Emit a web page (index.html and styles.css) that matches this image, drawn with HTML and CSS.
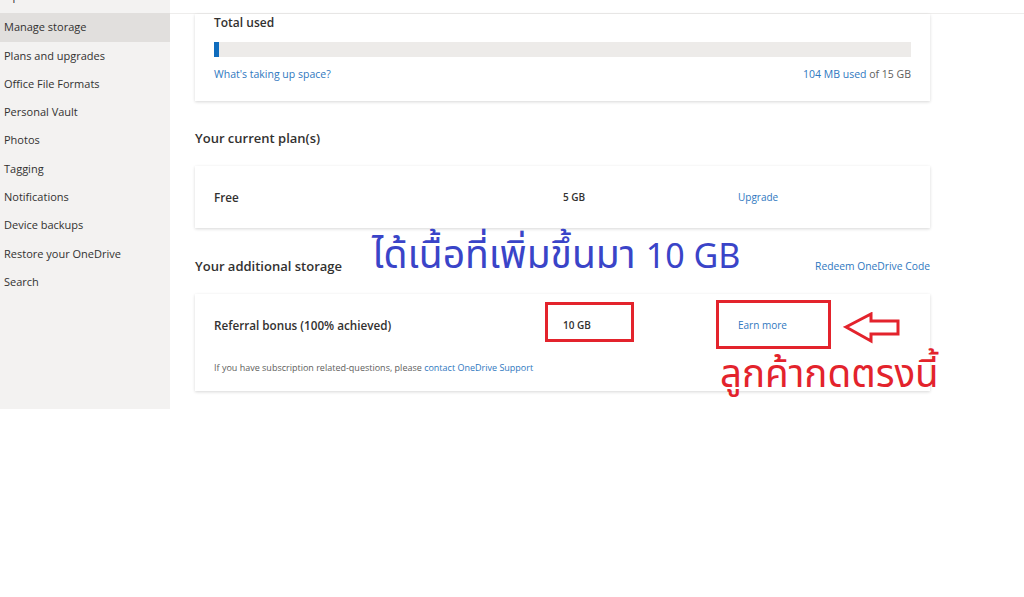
FILE: index.html
```html
<!DOCTYPE html>
<html lang="en">
<head>
<meta charset="UTF-8" />
<title>Manage storage - OneDrive</title>
<link rel="stylesheet" href="styles.css">
</head>
<body>
<div class="page">
  <nav class="sidebar">
    <ul class="nav-list">
      <li class="clipped">Options</li>
      <li class="active">Manage storage</li>
      <li>Plans and upgrades</li>
      <li>Office File Formats</li>
      <li>Personal Vault</li>
      <li>Photos</li>
      <li>Tagging</li>
      <li>Notifications</li>
      <li>Device backups</li>
      <li>Restore your OneDrive</li>
      <li>Search</li>
    </ul>
  </nav>

  <main class="content">
    <div class="topbar"></div>

    <section class="card usage">
      <div class="usage-title">Total used</div>
      <div class="bar"><div class="bar-fill" style="width: 5px"></div></div>
      <div class="usage-foot">
        <a class="link">What's taking up space?</a>
        <span><a class="link">104 MB used</a> of 15 GB</span>
      </div>
    </section>

    <div class="section-head head-plan">
      <h2>Your current plan(s)</h2>
    </div>
    <section class="card plan">
      <div class="row">
        <div class="col-name">Free</div>
        <div class="col-size">5 GB</div>
        <div class="col-action"><a class="link">Upgrade</a></div>
      </div>
    </section>

    <div class="section-head head-extra">
      <h2>Your additional storage</h2>
      <a class="link small">Redeem OneDrive Code</a>
      <div class="note-blue">ได้เนื้อที่เพิ่มขึ้นมา <span class="latin">10 GB</span></div>
    </div>
    <section class="card extra">
      <div class="row">
        <div class="col-name">Referral bonus (100% achieved)</div>
        <div class="col-size">10 GB</div>
        <div class="col-action"><a class="link">Earn more</a></div>
      </div>
      <p class="support">If you have subscription related-questions, please <a class="link">contact OneDrive Support</a></p>

      <div class="mark mark-size"></div>
      <div class="mark mark-action"></div>
      <svg class="arrow" width="60" height="32" viewBox="0 0 60 32">
        <polygon points="3,15 28,2 28,9 55,9 55,22 28,22 28,29" fill="none" stroke="#e3232c" stroke-width="3" stroke-linejoin="miter"/>
      </svg>
      <div class="note-red">ลูกค้ากดตรงนี้</div>
    </section>
  </main>
</div>
</body>
</html>
```

FILE: styles.css
```css
body {
  margin: 0;
  background: #fff;
  color: #323130;
  font-family: "Open Sans", "Noto Sans", sans-serif;
}
.page {
  display: flex;
  align-items: flex-start;
}
.sidebar {
  width: 170px;
  height: 409px;
  background: #f3f2f1;
  overflow: hidden;
  flex-shrink: 0;
}
.nav-list {
  list-style: none;
  margin: -15px 0 0;
  padding: 0;
}
.nav-list li {
  height: 28.3px;
  line-height: 28px;
  padding-left: 4px;
  font-size: 11px;
  color: #323130;
}
.nav-list li.clipped {
  line-height: 22px;
  overflow: hidden;
}
.nav-list li.active {
  background: #e1dfdd;
}

.content {
  width: 840px;
  padding-left: 25px;
}
.topbar {
  height: 13px;
  border-bottom: 1px solid #eeedec;
  margin-left: -25px;
}
.card {
  position: relative;
  width: 735px;
  background: #fff;
  box-shadow: 0 1px 3px rgba(0, 0, 0, 0.16);
  box-sizing: border-box;
  padding: 0 19px;
}
.link {
  color: #2f78c0;
  text-decoration: none;
}

.usage {
  height: 87px;
  padding-top: 1px;
}
.usage-title {
  font-size: 12px;
  font-weight: 600;
  line-height: 16px;
}
.bar {
  height: 15px;
  margin-top: 11px;
  background: #edebe9;
}
.bar-fill {
  height: 100%;
  background: #0f6cbd;
}
.usage-foot {
  display: flex;
  justify-content: space-between;
  font-size: 10.5px;
  color: #605e5c;
  margin-top: 10px;
}

.section-head {
  position: relative;
  width: 735px;
  box-sizing: border-box;
  padding-top: 9px;
  display: flex;
  justify-content: space-between;
  align-items: center;
}
.section-head h2 {
  margin: 0;
  font-size: 13px;
  font-weight: 600;
  color: #323130;
}
.section-head .small {
  font-size: 10.3px;
}
.head-plan {
  height: 65px;
}
.head-extra {
  height: 66px;
}

.row {
  display: flex;
  align-items: center;
}
.col-name {
  width: 349px;
  font-size: 11.7px;
  font-weight: 600;
}
.col-size {
  width: 175px;
  font-size: 10px;
  font-weight: 600;
}
.col-action {
  font-size: 10px;
}
.plan {
  height: 62px;
  padding-top: 23px;
}
.extra {
  height: 97px;
  padding-top: 23px;
}
.support {
  margin: 28px 0 0;
  font-size: 9px;
  color: #605e5c;
}

/* annotations */
.note-blue {
  position: absolute;
  left: 177px;
  top: -1px;
  font-family: "Noto Sans Thai", "Loma", "Tahoma", "DejaVu Sans", sans-serif;
  font-size: 39px;
  color: #3a44c8;
  white-space: nowrap;
}
.note-blue .latin {
  font-size: 34px;
}
.mark {
  position: absolute;
  border: 3px solid #e3232c;
  box-sizing: border-box;
}
.mark-size {
  left: 350px;
  top: 8px;
  width: 89px;
  height: 40px;
}
.mark-action {
  left: 521px;
  top: 6px;
  width: 115px;
  height: 49px;
}
.arrow {
  position: absolute;
  left: 648px;
  top: 18px;
}
.note-red {
  position: absolute;
  left: 525px;
  top: 52px;
  font-family: "Noto Sans Thai", "Loma", "Tahoma", "DejaVu Sans", sans-serif;
  font-size: 38.5px;
  color: #e3232c;
  white-space: nowrap;
}
```
